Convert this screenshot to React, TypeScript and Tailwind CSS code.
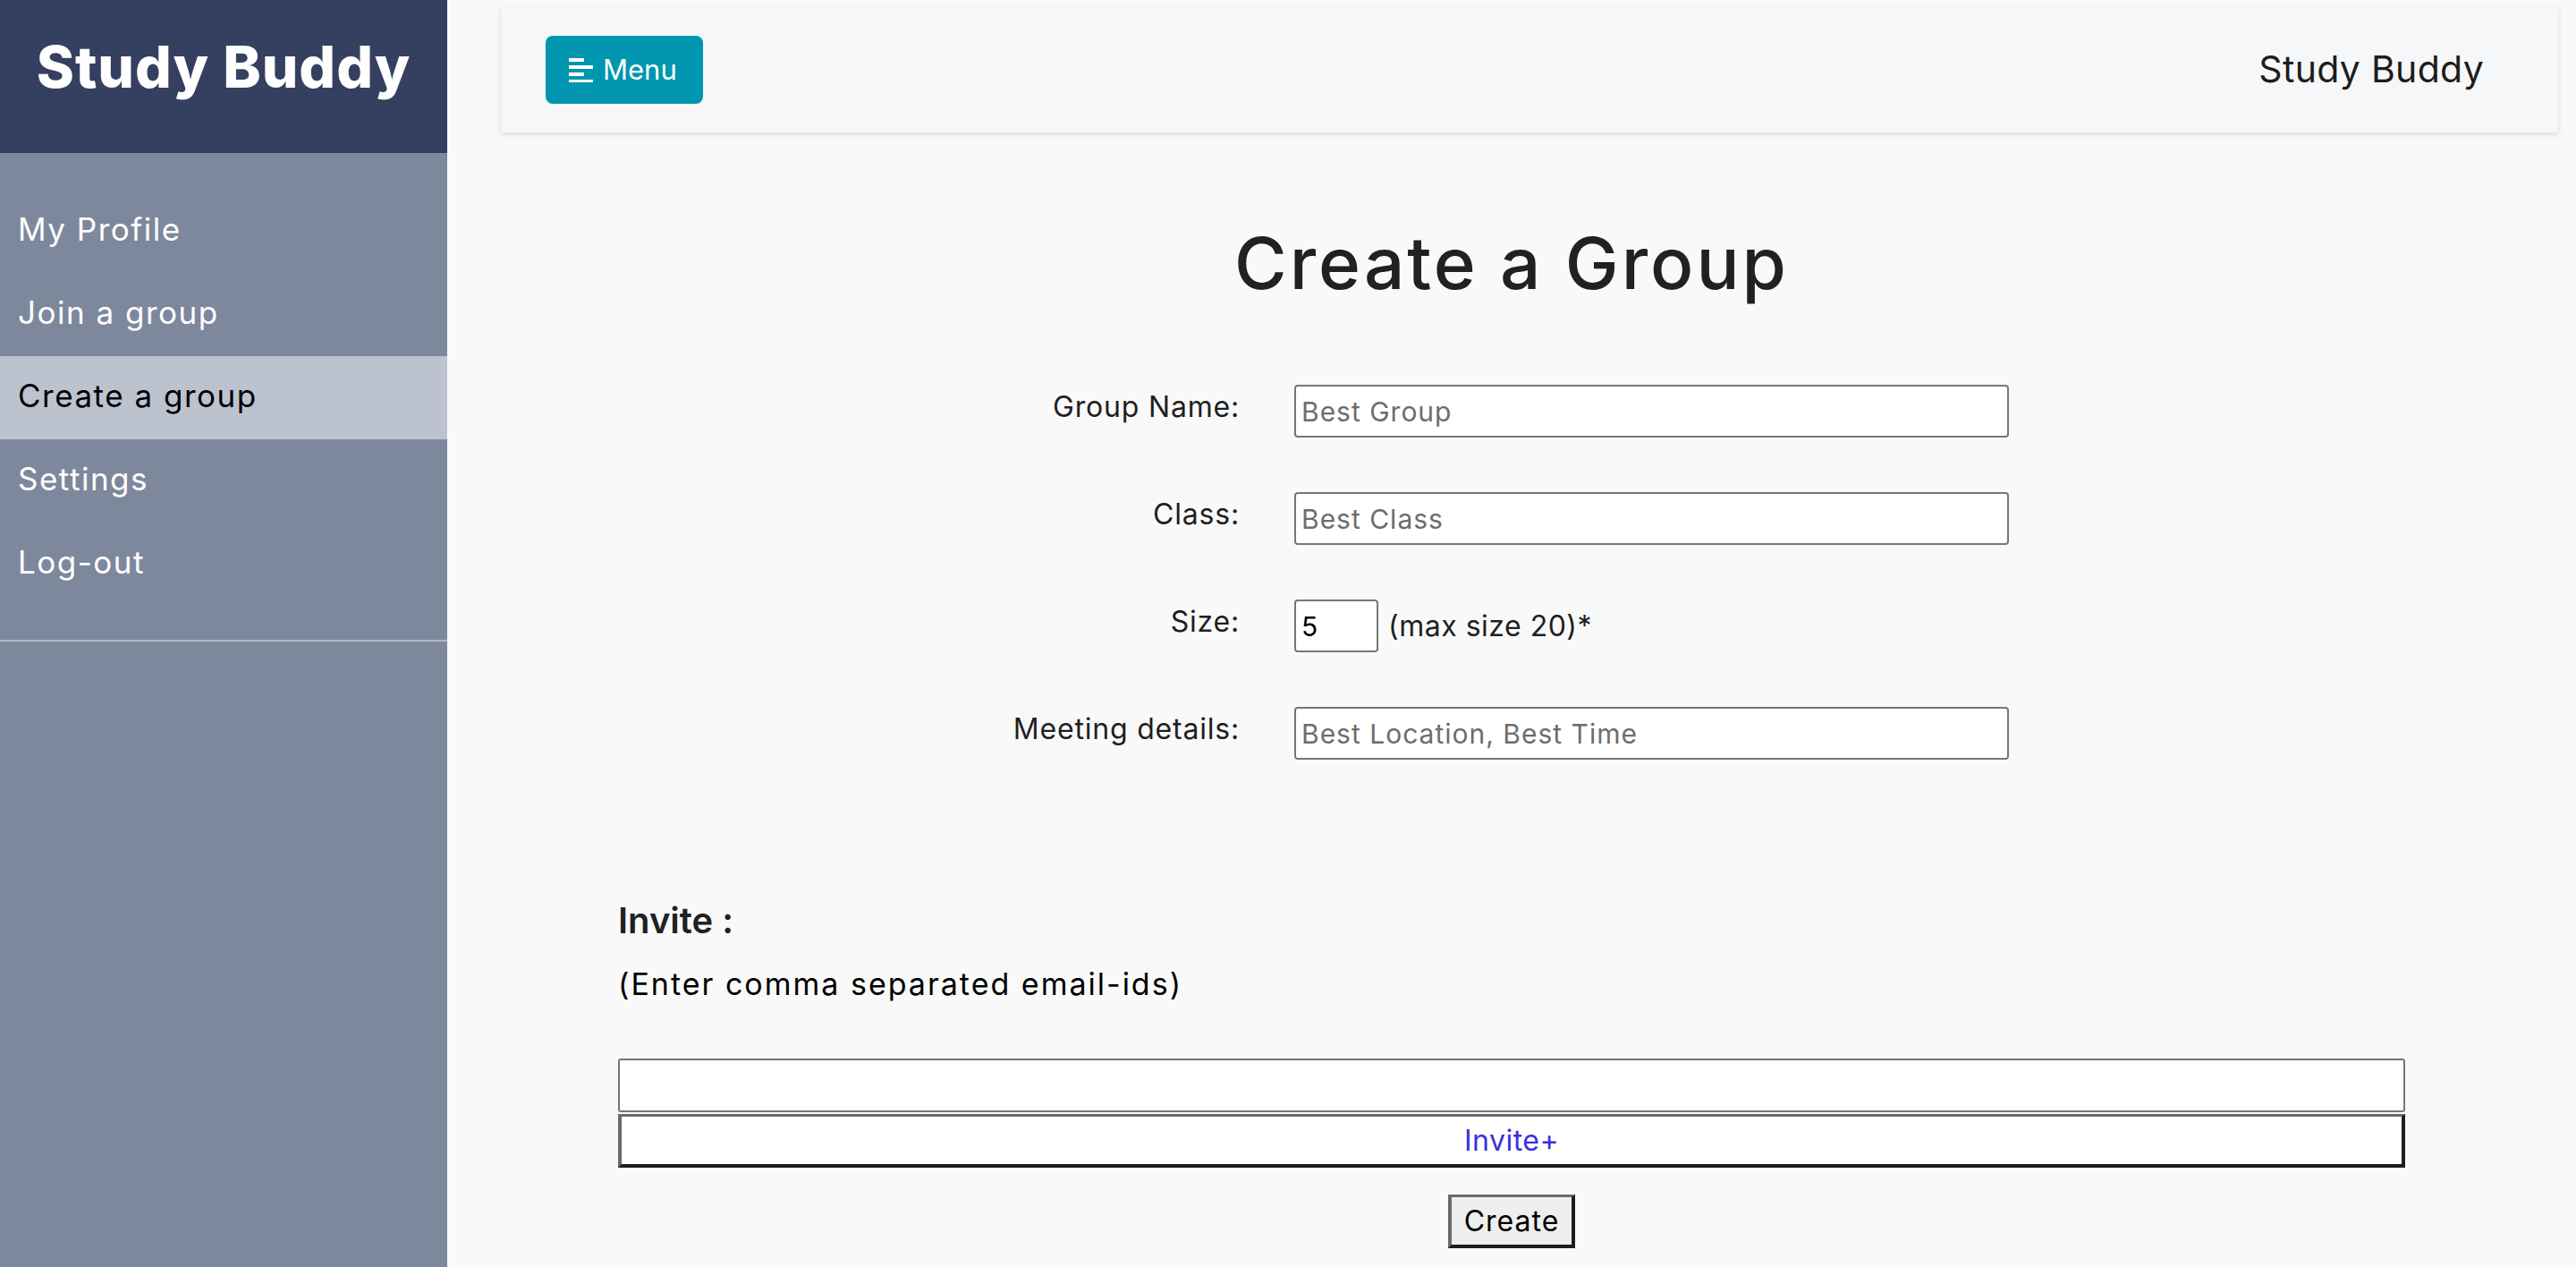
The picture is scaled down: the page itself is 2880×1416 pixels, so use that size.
import { useState } from 'react';

const navItems = ['My Profile', 'Join a group', 'Create a group', 'Settings', 'Log-out'];

function MenuIcon() {
  // four staggered bars, short / long / short / long
  return (
    <svg width="28" height="28" viewBox="0 0 28 28" className="shrink-0">
      <rect x="0" y="1" width="17" height="4" fill="#ffffff" />
      <rect x="0" y="9" width="27" height="4" fill="#ffffff" />
      <rect x="0" y="17" width="17" height="4" fill="#ffffff" />
      <rect x="0" y="25" width="27" height="4" fill="#ffffff" />
    </svg>
  );
}

function Sidebar() {
  return (
    <aside className="flex w-[500px] shrink-0 flex-col bg-[#7e889c]">
      <div className="h-[171px] bg-[#353f5f] pt-[43px] text-center">
        <span className="text-[64px] font-extrabold leading-none tracking-[1px] text-white">Study Buddy</span>
      </div>
      <nav className="pt-[41px] pb-[38px]">
        {navItems.map((item) => {
          const active = item === 'Create a group';
          return (
            <a
              key={item}
              href="#"
              className={
                active
                  ? 'flex h-[93px] items-center bg-[#bcc3cf] pb-[4px] pl-[20px] text-[35px] tracking-[1.5px] text-black'
                  : 'flex h-[93px] items-center pb-[4px] pl-[20px] text-[35px] tracking-[1.5px] text-white'
              }
            >
              {item}
            </a>
          );
        })}
      </nav>
      <div className="h-[2px] bg-[#b3b8c3]" />
    </aside>
  );
}

function Label({ children }: { children: string }) {
  return (
    <label className="justify-self-end whitespace-nowrap pt-[9px] text-right text-[32px] leading-none tracking-[0.8px] text-[#1f1f1f]">
      {children}
    </label>
  );
}

function Field({ label, placeholder }: { label: string; placeholder: string }) {
  return (
    <>
      <Label>{label}</Label>
      <input
        placeholder={placeholder}
        className="h-[59px] w-full rounded-[4px] border-2 border-[#767676] bg-white px-[6px] text-[30px] tracking-[1px] text-black placeholder:text-[#6d6d6d] outline-none"
      />
    </>
  );
}

export default function App() {
  const [size, setSize] = useState('5');
  const [emails, setEmails] = useState('');

  return (
    <div className="flex h-[1416px] min-h-screen overflow-hidden font-['Inter','Noto_Sans',sans-serif]">
      <Sidebar />
      <main className="flex flex-1 flex-col bg-[#f9f9f9]">
        <header className="ml-[60px] mr-[20px] mt-[8px] flex h-[140px] items-center justify-between bg-[#f6f7f9] pl-[50px] pr-[83px] shadow-[0_2px_6px_rgba(0,0,0,0.13)]">
          <button className="flex h-[76px] w-[176px] items-center gap-[10px] rounded-[8px] bg-[#0096b0] pl-[26px] text-[31px] text-white">
            <MenuIcon />
            Menu
          </button>
          <span className="text-[41px] tracking-[0.3px] text-[#1d1d1d]">Study Buddy</span>
        </header>

        <h1 className="mt-[106px] text-center text-[80px] font-medium leading-none tracking-[3px] text-[#212121]">
          Create a Group
        </h1>

        <form className="mt-[96px] grid grid-cols-[252px_799px] justify-center gap-x-[61px] gap-y-[61px]">
          <Field label="Group Name:" placeholder="Best Group" />
          <Field label="Class:" placeholder="Best Class" />
          <Label>Size:</Label>
          <div className="flex items-center gap-[11px]">
            <input
              value={size}
              onChange={(e) => setSize(e.target.value)}
              className="h-[59px] w-[94px] rounded-[4px] border-2 border-[#767676] bg-white px-[6px] text-[30px] text-black outline-none"
            />
            <span className="text-[32px] tracking-[0.5px] text-[#1f1f1f]">(max size 20)*</span>
          </div>
          <Field label="Meeting details:" placeholder="Best Location, Best Time" />
        </form>

        <section className="mx-auto mt-[160px] flex w-[1998px] flex-col">
          <h2 className="text-[40px] font-semibold leading-none text-[#212121]">Invite :</h2>
          <p className="mt-[34px] text-[34px] leading-none tracking-[2px] text-black">(Enter comma separated email-ids)</p>
          <input
            value={emails}
            onChange={(e) => setEmails(e.target.value)}
            className="mt-[66px] h-[60px] w-full rounded-[3px] border-2 border-[#767676] bg-white px-[6px] text-[28px] outline-none"
          />
          <button
            type="button"
            className="mt-[2px] h-[60px] w-full border-[4px] border-t-[3px] border-t-[#6b6b6b] border-l-[#6b6b6b] border-r-[#1e1e1e] border-b-[#1e1e1e] bg-white text-[32px] tracking-[0.5px] text-[#3b2fe0]"
          >
            Invite+
          </button>
          <button
            type="button"
            className="mx-auto mt-[30px] h-[60px] w-[142px] border-[4px] border-t-[3px] border-t-[#6b6b6b] border-l-[#6b6b6b] border-r-[#1e1e1e] border-b-[#1e1e1e] bg-[#eeeeee] text-[32px] tracking-[1px] text-black"
          >
            Create
          </button>
        </section>
      </main>
    </div>
  );
}
